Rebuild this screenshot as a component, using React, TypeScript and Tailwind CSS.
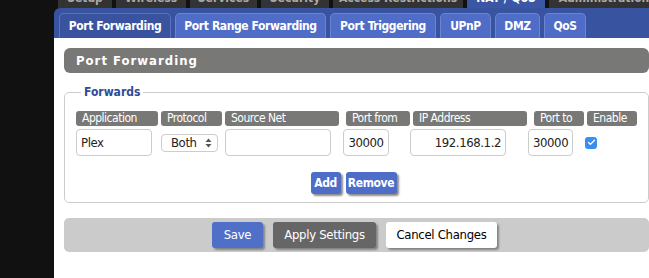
import { Check } from "lucide-react";

const TOP_TABS = [
  { label: "Setup", w: "w-[54px]" },
  { label: "Wireless", w: "w-[70px]" },
  { label: "Services", w: "w-[67px]" },
  { label: "Security", w: "w-[68px]" },
  { label: "Access Restrictions", w: "w-[130px]" },
  { label: "NAT / QoS", w: "w-[78px]", active: true },
  { label: "Administration", w: "w-[110px]" },
];

const SUB_TABS = [
  { label: "Port Forwarding", w: "w-[112px]", active: true },
  { label: "Port Range Forwarding", w: "w-[151px]" },
  { label: "Port Triggering", w: "w-[106px]" },
  { label: "UPnP", w: "w-[51px]" },
  { label: "DMZ", w: "w-[45px]" },
  { label: "QoS", w: "w-[42px]" },
];

const font = "font-['DejaVu_Sans_Condensed','DejaVu_Sans',sans-serif]";

function Header({ label, w }: { label: string; w: string }) {
  return (
    <div className={`${w} h-[15px] bg-[#787876] rounded-[3px] px-[6px] text-white text-[12px] tracking-[-0.5px] leading-[15px] whitespace-nowrap overflow-hidden`}>
      {label}
    </div>
  );
}

function TextBox({ value, w, align = "text-left" }: { value: string; w: string; align?: string }) {
  return (
    <div className={`${w} h-[27px] border border-[#ccc] rounded-[4px] bg-white px-[4px] text-[13px] tracking-[-0.4px] leading-[25px] text-[#222] ${align} whitespace-nowrap overflow-hidden`}>
      {value}
    </div>
  );
}

export default function App() {
  return (
    <div className={`w-[649px] h-[278px] bg-[#111] flex overflow-hidden ${font}`}>
      <div className="w-[54px] shrink-0" />
      <div className="flex-1 flex flex-col">
        {/* main menu, mostly scrolled off */}
        <div className="h-[8px] flex gap-[4px] pl-[4px] overflow-hidden">
          {TOP_TABS.map((t) => (
            <div
              key={t.label}
              className={`${t.w} shrink-0 h-[8px] overflow-hidden text-center text-[12px] font-bold whitespace-nowrap ${
                t.active ? "bg-[#3a56a4] text-white" : "bg-[#333] text-[#aaa]"
              }`}
            >
              <div className="leading-[12px] -mt-[8px]">{t.label}</div>
            </div>
          ))}
        </div>

        {/* sub menu */}
        <div className="h-[30px] bg-[#3853a0] rounded-tl-[6px] flex items-end gap-[4px] pl-[5px]">
          {SUB_TABS.map((t) => (
            <div
              key={t.label}
              className={`${t.w} shrink-0 h-[25px] rounded-t-[5px] border border-b-0 text-center text-[12px] font-bold tracking-[-0.4px] text-white leading-[24px] whitespace-nowrap ${
                t.active ? "bg-[#39539f] border-[#5673c4]" : "bg-[#4f6dc6] border-[#6a86d2]"
              }`}
            >
              {t.label}
            </div>
          ))}
        </div>

        {/* content */}
        <div className="flex-1 bg-white px-[10px] pt-[10px]">
          <div className="h-[25px] bg-[#787876] rounded-[6px] pl-[12px] text-white text-[13px] font-bold tracking-[1px] leading-[25px]">
            Port Forwarding
          </div>

          <fieldset className="mt-[12px] border border-[#ccc] rounded-[5px] px-[11px] h-[118px]">
            <legend className="ml-[5px] px-[3px] text-[12px] font-bold text-[#2e4b9c] leading-[14px]">
              Forwards
            </legend>
            <div className="mt-[12px] flex gap-[3px]">
              <Header label="Application" w="w-[82px]" />
              <Header label="Protocol" w="w-[61px]" />
              <Header label="Source Net" w="w-[114px]" />
              <div className="w-[1px]" />
              <Header label="Port from" w="w-[64px]" />
              <Header label="IP Address" w="w-[114px]" />
              <div className="w-[1px]" />
              <Header label="Port to" w="w-[50px]" />
              <Header label="Enable" w="w-[50px]" />
            </div>
            <div className="mt-[3px] flex items-center">
              <TextBox value="Plex" w="w-[76px]" />
              <div className="ml-[9px] w-[57px] h-[18px] border border-[#ccc] rounded-[4px] bg-white flex items-center pl-[9px] pr-[5px] text-[13px] tracking-[-0.4px] text-[#222]">
                <span className="flex-1 leading-[16px]">Both</span>
                <svg width="7" height="10" viewBox="0 0 7 10" className="text-[#555]">
                  <path d="M3.5 0.5 L6.5 4 L0.5 4 Z" fill="currentColor" />
                  <path d="M3.5 9.5 L6.5 6 L0.5 6 Z" fill="currentColor" />
                </svg>
              </div>
              <div className="ml-[7px]">
                <TextBox value="" w="w-[106px]" />
              </div>
              <div className="ml-[12px]">
                <TextBox value="30000" w="w-[46px]" align="text-center" />
              </div>
              <div className="ml-[21px]">
                <TextBox value="192.168.1.2" w="w-[96px]" align="text-right" />
              </div>
              <div className="ml-[22px]">
                <TextBox value="30000" w="w-[45px]" align="text-center" />
              </div>
              <div className="ml-[12px] w-[12px] h-[12px] rounded-[3px] bg-[#3a8ef2] flex items-center justify-center">
                <Check size={9} strokeWidth={3.5} className="text-white" />
              </div>
            </div>
            <div className="mt-[16px] flex justify-center gap-[5px] pr-[6px]">
              <button className="h-[22px] w-[30px] rounded-[3px] bg-[#4d6dc8] text-white text-[12px] font-bold tracking-[-0.4px] shadow-[2px_2px_2px_rgba(0,0,0,0.45)]">
                Add
              </button>
              <button className="h-[22px] w-[51px] rounded-[3px] bg-[#4d6dc8] text-white text-[12px] font-bold tracking-[-0.4px] shadow-[2px_2px_2px_rgba(0,0,0,0.45)]">
                Remove
              </button>
            </div>
          </fieldset>

          <div className="mt-[15px] h-[34px] bg-[#cbcbcb] rounded-[5px] flex items-center justify-center gap-[10px] pr-[4px]">
            <button className="h-[26px] w-[51px] rounded-[3px] bg-[#5070c8] text-white text-[13px] tracking-[-0.3px] shadow-[2px_2px_2px_rgba(0,0,0,0.35)]">
              Save
            </button>
            <button className="h-[26px] w-[103px] rounded-[3px] bg-[#666] text-white text-[13px] tracking-[-0.3px] shadow-[2px_2px_2px_rgba(0,0,0,0.35)]">
              Apply Settings
            </button>
            <button className="h-[26px] w-[111px] rounded-[3px] bg-white text-black text-[13px] tracking-[-0.3px] shadow-[2px_2px_2px_rgba(0,0,0,0.35)]">
              Cancel Changes
            </button>
          </div>
        </div>
      </div>
    </div>
  );
}
